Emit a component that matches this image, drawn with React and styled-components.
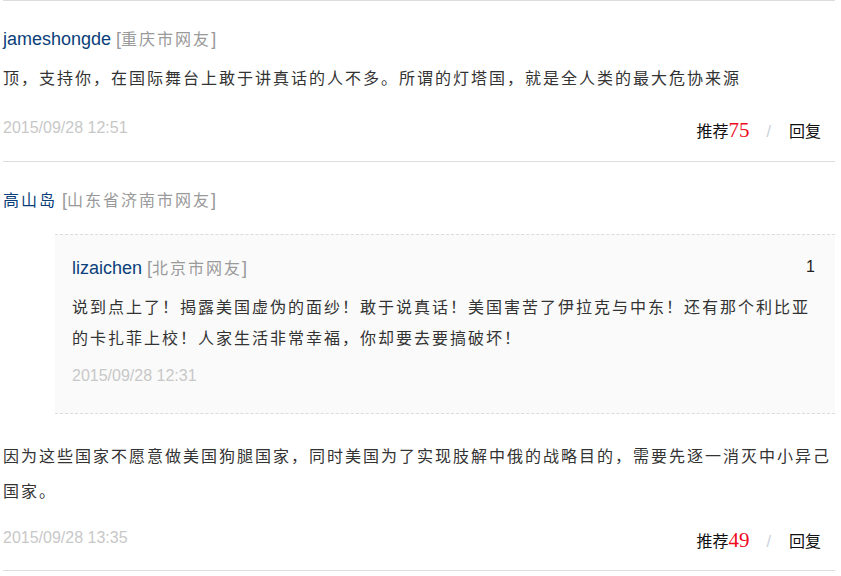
import React from 'react'
import styled, { createGlobalStyle } from 'styled-components'

const GlobalStyle = createGlobalStyle`
  html, body {
    margin: 0;
    padding: 0;
    background: #fff;
  }
  body {
    font-family: "Liberation Sans", Arial, "Noto Sans CJK SC", sans-serif;
    color: #333;
  }
`

const CJK = `"Noto Sans CJK SC", "Liberation Sans", sans-serif`

const List = styled.div`
  width: 832px;
  margin-left: 3px;
`

const CommentItem = styled.div`
  border-top: 1px solid #ddd;
  padding: 25px 0 ${({ last }) => (last ? '20px' : '21px')} 0;
  ${({ last }) => last && 'border-bottom: 1px solid #ddd;'}
`

const Header = styled.div`
  display: flex;
  justify-content: space-between;
  align-items: center;
  height: 24px;
  line-height: 24px;
`

const UserLine = styled.div`
  font-size: 18px;
  white-space: nowrap;
  .name {
    color: #0b3f7a;
    font-family: "Liberation Sans", ${CJK};
  }
  .name.cjk {
    font-family: ${CJK};
    font-size: 16px;
    letter-spacing: 2px;
  }
  .loc {
    color: #9a9a9a;
    margin-left: 5px;
    font-family: ${CJK};
    font-size: 16px;
    letter-spacing: 2px;
    .br {
      font-family: "Liberation Sans", sans-serif;
      font-size: 18px;
      letter-spacing: 0;
    }
  }
`

const Floor = styled.span`
  font-size: 16px;
  color: #222;
`

const Body = styled.p`
  margin: ${({ top }) => top}px 0 0;
  font-family: ${CJK};
  font-size: 16px;
  letter-spacing: 2px;
  line-height: ${({ lh }) => lh}px;
  color: #333;
`

const Footer = styled.div`
  display: flex;
  justify-content: space-between;
  align-items: center;
  height: 24px;
  padding-right: 14px;
  margin-top: ${({ top }) => top}px;
`

const Time = styled.span`
  font-size: 16px;
  color: #c8c8c8;
`

const Actions = styled.div`
  display: flex;
  align-items: baseline;
  margin-top: 4px;
  font-family: ${CJK};
  font-size: 16px;
  color: #111;
  .count {
    font-family: "Liberation Serif", serif;
    font-size: 21px;
    color: #ee0b1e;
  }
  .sep {
    font-family: "Liberation Sans", sans-serif;
    color: #c9d0dc;
    padding: 0 18px 0 17px;
  }
`

const ReplyBox = styled.div`
  margin: 23px 0 0 52px;
  padding: 20px 20px 25px 17px;
  background: #fafafa;
  border-top: 1px dashed #dcdcdc;
  border-bottom: 1px dashed #dcdcdc;
  ${Footer} {
    padding-right: 0;
  }
`

const UserInfo = ({ name, loc, cjk }) => (
  <UserLine>
    <span className={cjk ? 'name cjk' : 'name'}>{name}</span>
    <span className="loc">
      <span className="br">[</span>
      {loc}
      <span className="br">]</span>
    </span>
  </UserLine>
)

const Vote = ({ count }) => (
  <Actions>
    <span>推荐</span>
    <span className="count">{count}</span>
    <span className="sep">/</span>
    <span>回复</span>
  </Actions>
)

export default function App() {
  return (
    <>
      <GlobalStyle />
      <List>
        <CommentItem>
          <Header>
            <UserInfo name="jameshongde" loc="重庆市网友" />
          </Header>
          <Body top={10} lh={35}>
            顶，支持你，在国际舞台上敢于讲真话的人不多。所谓的灯塔国，就是全人类的最大危协来源
          </Body>
          <Footer top={21}>
            <Time>2015/09/28 12:51</Time>
            <Vote count={75} />
          </Footer>
        </CommentItem>

        <CommentItem last>
          <Header>
            <UserInfo name="高山岛" loc="山东省济南市网友" cjk />
          </Header>
          <ReplyBox>
            <Header>
              <UserInfo name="lizaichen" loc="北京市网友" />
              <Floor>1</Floor>
            </Header>
            <Body top={12} lh={31}>
              说到点上了！揭露美国虚伪的面纱！敢于说真话！美国害苦了伊拉克与中东！还有那个利比亚的卡扎菲上校！人家生活非常幸福，你却要去要搞破坏！
            </Body>
            <Footer top={11}>
              <Time>2015/09/28 12:31</Time>
            </Footer>
          </ReplyBox>
          <Body top={24} lh={35}>
            因为这些国家不愿意做美国狗腿国家，同时美国为了实现肢解中俄的战略目的，需要先逐一消灭中小异己国家。
          </Body>
          <Footer top={18}>
            <Time>2015/09/28 13:35</Time>
            <Vote count={49} />
          </Footer>
        </CommentItem>
      </List>
    </>
  )
}
